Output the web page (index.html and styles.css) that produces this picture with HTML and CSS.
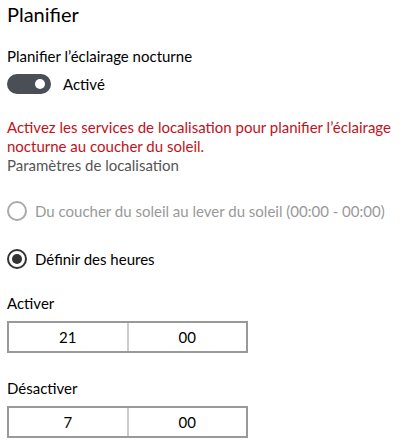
FILE: index.html
```html
<!DOCTYPE html>
<html lang="fr">
<head>
    <meta charset="UTF-8">
    <title>Planifier</title>
    <link rel="stylesheet" href="styles.css">
</head>
<body>
    <div class="page">
        <h1 class="title">Planifier</h1>
        <div class="label">Planifier l’éclairage nocturne</div>
        <div class="toggle-row">
            <span class="toggle"><span class="knob"></span></span>
            <span>Activé</span>
        </div>

        <p class="warning">Activez les services de localisation pour planifier l’éclairage nocturne au coucher du soleil.</p>
        <div class="link">Paramètres de localisation</div>

        <div class="radio disabled">
            <span class="circle"></span>
            <span>Du coucher du soleil au lever du soleil (00:00 - 00:00)</span>
        </div>
        <div class="radio checked">
            <span class="circle"></span>
            <span>Définir des heures</span>
        </div>

        <div class="time-label">Activer</div>
        <div class="time-box">
            <div class="cell">21</div>
            <div class="cell">00</div>
        </div>

        <div class="time-label">Désactiver</div>
        <div class="time-box">
            <div class="cell">7</div>
            <div class="cell">00</div>
        </div>
    </div>
</body>
</html>
```

FILE: styles.css
```css
body {
    margin: 0;
    background: #fff;
    font-family: Lato, sans-serif;
    font-size: 15px;
    color: #000;
}
.page {
    padding: 0 7px;
}
.title {
    margin: 0;
    font-size: 20px;
    font-weight: normal;
    line-height: 28px;
}
.label {
    margin-top: 18px;
    line-height: 20px;
}
.toggle-row {
    display: flex;
    align-items: center;
    gap: 12px;
    margin-top: 8px;
    height: 20px;
}
.toggle {
    position: relative;
    width: 44px;
    height: 20px;
    border-radius: 10px;
    background: #4a4f55;
}
.knob {
    position: absolute;
    top: 5px;
    right: 6px;
    width: 10px;
    height: 10px;
    border-radius: 50%;
    background: #fff;
}
.warning {
    margin: 24px 0 0;
    color: #c0121b;
    line-height: 19px;
}
.link {
    color: #555;
    line-height: 19px;
}
.radio {
    display: flex;
    align-items: center;
    gap: 8px;
    height: 20px;
    margin-top: 28px;
}
.radio .circle {
    box-sizing: border-box;
    width: 20px;
    height: 20px;
    border: 2px solid #333;
    border-radius: 50%;
    display: flex;
    align-items: center;
    justify-content: center;
}
.radio.disabled {
    margin-top: 26px;
    color: #999;
}
.radio.disabled .circle {
    border-color: #aaa;
}
.radio.checked .circle::after {
    content: "";
    width: 10px;
    height: 10px;
    border-radius: 50%;
    background: #333;
}
.time-label {
    margin-top: 24px;
    line-height: 20px;
}
.time-box + .time-label {
    margin-top: 25px;
}
.time-box {
    display: flex;
    box-sizing: border-box;
    width: 241px;
    height: 32px;
    margin-top: 8px;
    border: 2px solid #999;
}
.cell {
    flex: 1;
    display: flex;
    align-items: center;
    justify-content: center;
}
.cell + .cell {
    border-left: 2px solid #ccc;
}
```
